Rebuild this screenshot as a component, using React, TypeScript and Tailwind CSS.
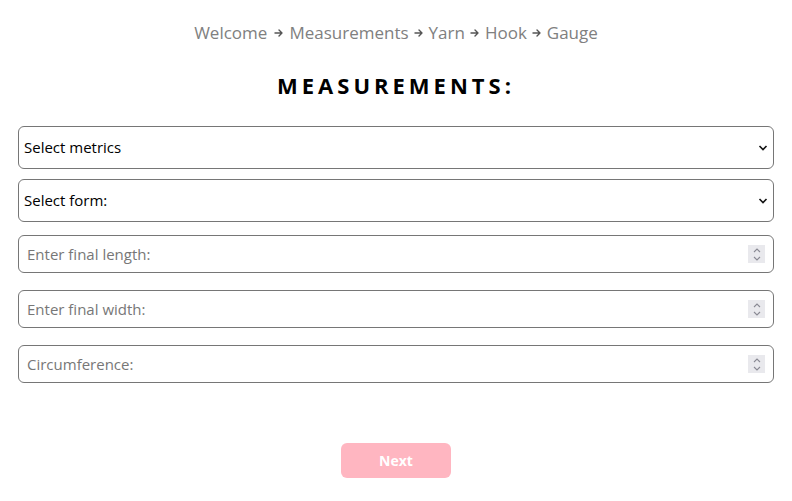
import React from 'react';

const steps = ['Welcome', 'Measurements', 'Yarn', 'Hook', 'Gauge'];

const Arrow = () => (
  <svg width="10" height="10" viewBox="0 0 10 10" className="mx-[5px] text-[#555]">
    <path d="M1 5h7M5 2l3 3-3 3" fill="none" stroke="currentColor" strokeWidth="1.4" strokeLinecap="round" strokeLinejoin="round" />
  </svg>
);

const Chevron = () => (
  <svg width="10" height="7" viewBox="0 0 10 7" className="pointer-events-none absolute right-[6px] top-1/2 -translate-y-1/2">
    <path d="M1.5 1.5l3.5 3.5 3.5-3.5" fill="none" stroke="#111" strokeWidth="1.6" />
  </svg>
);

const Spinner = () => (
  <div className="pointer-events-none absolute right-[9px] top-1/2 flex h-[18px] w-[17px] -translate-y-1/2 flex-col items-center justify-center gap-[3px] bg-[#e9e9ed]">
    <svg width="8" height="5" viewBox="0 0 8 5">
      <path d="M1 4l3-3 3 3" fill="none" stroke="#8a8a94" strokeWidth="1.1" />
    </svg>
    <svg width="8" height="5" viewBox="0 0 8 5">
      <path d="M1 1l3 3 3-3" fill="none" stroke="#8a8a94" strokeWidth="1.1" />
    </svg>
  </div>
);

const SelectBox: React.FC<{ label: string }> = ({ label }) => (
  <div className="relative">
    <select className="h-[43px] w-full appearance-none rounded-[6px] border border-[#767676] bg-white pl-[5px] text-[15px] text-black outline-none">
      <option>{label}</option>
    </select>
    <Chevron />
  </div>
);

const NumberBox: React.FC<{ placeholder: string }> = ({ placeholder }) => (
  <div className="relative">
    <input
      type="text"
      placeholder={placeholder}
      className="h-[38px] w-full rounded-[6px] border border-[#767676] bg-white pl-[8px] text-[15px] text-black outline-none placeholder:text-[#777]"
    />
    <Spinner />
  </div>
);

export default function App() {
  return (
    <div className="min-h-[501px] bg-white px-[18px] font-['Open_Sans',sans-serif]">
      <nav className="flex items-center justify-center pt-[20px] text-[17px] leading-[26px] text-[#808080]">
        {steps.map((s, i) => (
          <React.Fragment key={s}>
            {i > 0 && <Arrow />}
            <span className={i === 0 ? 'mr-[2px]' : ''}>{s}</span>
          </React.Fragment>
        ))}
      </nav>

      <h1 className="mt-[24px] text-center text-[22px] font-bold leading-[30px] tracking-[4px] text-black">
        MEASUREMENTS:
      </h1>

      <div className="mt-[26px] flex flex-col gap-[10px]">
        <SelectBox label="Select metrics" />
        <SelectBox label="Select form:" />
      </div>

      <div className="mt-[13px] flex flex-col gap-[17px]">
        <NumberBox placeholder="Enter final length:" />
        <NumberBox placeholder="Enter final width:" />
        <NumberBox placeholder="Circumference:" />
      </div>

      <div className="mt-[60px] flex justify-center">
        <button className="h-[35px] w-[110px] rounded-[6px] bg-[#ffb6c1] text-[14px] font-bold text-white">
          Next
        </button>
      </div>
    </div>
  );
}
